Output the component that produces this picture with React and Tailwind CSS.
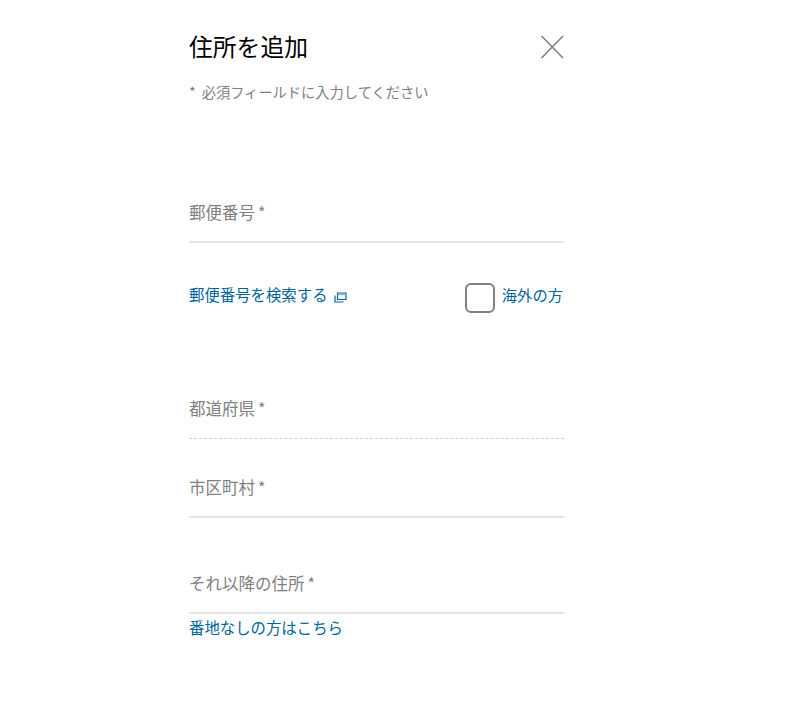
import React from 'react';

const Field = ({ label, dashed, className }) => (
  <div className={`flex items-start ${dashed ? 'border-b border-dashed border-[#cfcfcf]' : 'border-b-2 border-[#e4e4e4]'} ${className}`}>
    <span className="text-[16.5px] leading-[24px] text-[#808080]">{label}<span className="ml-[3px] text-[16px]">*</span></span>
  </div>
);

const App = () => {
  return (
    <div className="min-h-[722px] bg-white font-['Noto_Sans_CJK_JP','Liberation_Sans',sans-serif]">
      <div className="ml-[189px] w-[375px] pt-[29px]">
        {/* Header */}
        <div className="flex items-center justify-between h-[34px]">
          <h1 className="text-[23.8px] leading-[34px] text-black font-normal">住所を追加</h1>
          <svg width="24" height="24" viewBox="0 0 24 24" fill="none" stroke="#808080" strokeWidth="1.6" className="mt-[2px]">
            <path d="M1.5 1l21.5 22M23 1L1.5 23" />
          </svg>
        </div>
        <p className="mt-[19px] text-[14.25px] leading-[20px] text-[#808080]">
          <span className="mr-[6px]">*</span>必須フィールドに入力してください
        </p>

        <Field label="郵便番号" className="mt-[98px] h-[43px]" />

        {/* Search link + overseas checkbox */}
        <div className="mt-[40px] flex items-start justify-between h-[30px]">
          <a className="flex items-center text-[15.4px] leading-[22px] text-[#00649a]">
            郵便番号を検索する
            <svg width="13" height="11" viewBox="0 0 13 11" fill="none" stroke="#00649a" strokeWidth="1.2" className="ml-[6px] mt-[6px]">
              <path d="M3.5 7.5V1h8.5v6.5z" />
              <path d="M3.5 2.6h8.5" stroke="#7fb1cc" />
              <path d="M1 3.5V10h8.5" />
            </svg>
          </a>
          <label className="flex items-start">
            <span className="w-[30px] h-[30px] rounded-[6px] border-2 border-[#808080]" />
            <span className="ml-[7px] mr-[1px] text-[15.3px] leading-[22px] text-[#00649a]">海外の方</span>
          </label>
        </div>

        <Field label="都道府県" dashed className="mt-[83px] h-[43px]" />
        <Field label="市区町村" className="mt-[36px] h-[43px]" />
        <Field label="それ以降の住所" className="mt-[53px] h-[43px]" />

        <a className="block mt-[2px] text-[15.4px] leading-[22px] text-[#00649a]">番地なしの方はこちら</a>
      </div>
    </div>
  );
};

export default App;
